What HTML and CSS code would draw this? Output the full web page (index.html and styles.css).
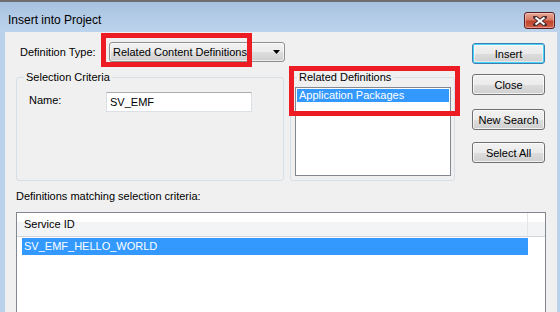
FILE: index.html
```html
<!DOCTYPE html>
<html>
<head>
<meta charset="utf-8">
<link rel="stylesheet" href="styles.css">
</head>
<body>
<div class="frame">
  <div class="titlebar">
    <span class="title">Insert into Project</span>
    <div class="close-btn">
      <svg width="14" height="10" viewBox="0 0 14 10">
        <path d="M2 1 L12 9 M12 1 L2 9" stroke="#4a3030" stroke-width="4" stroke-linecap="square"/>
        <path d="M2.5 1.5 L11.5 8.5 M11.5 1.5 L2.5 8.5" stroke="#ffffff" stroke-width="2"/>
      </svg>
    </div>
  </div>
  <div class="client">
    <div class="top">
      <div class="left">
        <div class="deftype-row">
          <span class="deftype-label">Definition Type:</span>
          <div class="combo">
            <span>Related Content Definitions</span>
            <svg class="arrow" width="7" height="4" viewBox="0 0 7 4"><path d="M0 0 H7 L3.5 4 Z" fill="#000"/></svg>
          </div>
        </div>
        <div class="groups">
          <fieldset class="group sel">
            <legend>Selection Criteria</legend>
            <div class="name-row">
              <span class="name-label">Name:</span>
              <div class="input">SV_EMF</div>
            </div>
          </fieldset>
          <fieldset class="group rel">
            <legend>Related Definitions</legend>
            <div class="listbox">
              <div class="item selected">Application Packages</div>
            </div>
          </fieldset>
        </div>
      </div>
      <div class="buttons">
        <div class="btn default">Insert</div>
        <div class="btn b-close">Close</div>
        <div class="btn b-new">New Search</div>
        <div class="btn b-all">Select All</div>
      </div>
    </div>
    <div class="matching-label">Definitions matching selection criteria:</div>
    <div class="results">
      <div class="header">
        <div class="col-main">Service ID</div>
        <div class="col-rest"></div>
      </div>
      <div class="row selected">SV_EMF_HELLO_WORLD</div>
    </div>
  </div>
  <div class="annot a1"></div>
  <div class="annot a2"></div>
</div>
</body>
</html>
```
FILE: styles.css
```css
* { box-sizing: border-box; }
html, body { margin: 0; padding: 0; }
body {
  width: 560px;
  height: 312px;
  overflow: hidden;
  font-family: "Liberation Sans", Arial, sans-serif;
  font-size: 11px;
  color: #000;
}
.frame {
  position: relative;
  width: 560px;
  height: 312px;
  background: #b9d1ea;
  border-top: 2px solid #6d6d6d;
  display: flex;
  flex-direction: column;
}
.titlebar {
  height: 30px;
  background: linear-gradient(to bottom, #a6c1df 0%, #b3cbe6 50%, #bcd3eb 100%);
  display: flex;
  align-items: flex-start;
  justify-content: space-between;
  padding: 0 5px 0 8px;
}
.title {
  margin-top: 11px;
  font-size: 12px;
  line-height: 14px;
  color: #000;
}
.close-btn {
  margin-top: 10px;
  width: 31px;
  height: 17px;
  border: 1px solid #5b1e1e;
  border-radius: 3px;
  background: linear-gradient(to bottom, #e8a898 0%, #d97a64 45%, #c0432b 55%, #d2614a 100%);
  display: flex;
  align-items: center;
  justify-content: center;
  box-shadow: inset 0 0 0 1px rgba(255,255,255,0.35);
}
.client {
  margin: 0 3px 0 5px;
  flex: 1;
  background: #f0f0f0;
  padding: 0 11px;
  display: flex;
  flex-direction: column;
}
.top {
  display: flex;
  justify-content: space-between;
}
.left { width: 439px; }
.deftype-row {
  display: flex;
  align-items: center;
  margin-top: 10px;
  height: 20px;
}
.deftype-label {
  width: 93px;
  padding-left: 4px;
}
.combo {
  width: 176px;
  height: 20px;
  border: 1px solid #8e8f8f;
  border-radius: 3px;
  background: linear-gradient(to bottom, #f2f2f2 0%, #ebebeb 50%, #dddddd 51%, #cfcfcf 100%);
  display: flex;
  align-items: center;
  justify-content: space-between;
  padding: 0 4px 0 3px;
  box-shadow: inset 0 0 0 1px rgba(255,255,255,0.6);
}
.groups {
  display: flex;
  justify-content: space-between;
  margin-top: 9px;
  height: 110px;
}
.group {
  margin: 0;
  border: 1px solid #d5dfe5;
  border-radius: 3px;
  min-width: 0;
}
.group legend {
  padding: 0 2px;
  line-height: 13px;
}
.sel {
  width: 268px;
  padding: 8px 0 0 7px;
}
.rel {
  width: 165px;
  padding: 3px 3px 4px 4px;
}
.rel legend { margin-left: 2px; }
.name-row {
  display: flex;
  align-items: flex-start;
}
.name-label {
  width: 82px;
  padding-left: 5px;
  margin-top: 2px;
}
.input {
  width: 146px;
  height: 20px;
  background: #fff;
  border: 1px solid #dbdfe6;
  border-top-color: #abadb3;
  padding: 2px 3px;
  line-height: 14px;
}
.listbox {
  width: 156px;
  height: 89px;
  background: #fff;
  border: 1px solid #828790;
  padding: 1px;
}
.item {
  height: 13px;
  line-height: 13px;
  padding-left: 2px;
}
.selected {
  background: #3399ff;
  color: #fff;
}
.buttons {
  width: 73px;
  margin-right: 1px;
  display: flex;
  flex-direction: column;
}
.btn {
  height: 21px;
  border: 1px solid #707070;
  border-radius: 3px;
  background: linear-gradient(to bottom, #f2f2f2 0%, #ebebeb 50%, #dddddd 51%, #cfcfcf 100%);
  box-shadow: inset 0 0 0 1px rgba(255,255,255,0.7);
  display: flex;
  align-items: center;
  justify-content: center;
}
.btn.default {
  margin-top: 11px;
  border-color: #3c7fb1;
  box-shadow: inset 0 0 0 1px #48d2f9, inset 0 0 0 2px rgba(255,255,255,0.5);
}
.b-close { margin-top: 10px; }
.b-new { margin-top: 14px; }
.b-all { margin-top: 12px; }
.matching-label {
  margin-top: 9px;
  line-height: 13px;
}
.results {
  margin-top: 9px;
  flex: 1;
  background: #fff;
  border: 1px solid #828790;
  border-bottom: none;
  padding: 0 0 0 5px;
}
.header {
  display: flex;
  height: 24px;
  margin-left: -5px;
  border-bottom: 1px solid #d5d5d5;
  background: linear-gradient(to bottom, #ffffff 0%, #ffffff 40%, #f3f4f6 41%, #f3f4f6 100%);
}
.col-main {
  width: 511px;
  padding-left: 7px;
  line-height: 23px;
  border-right: 1px solid #e3e5e8;
}
.col-rest { flex: 1; }
.row {
  margin-top: 1px;
  width: 506px;
  height: 17px;
  line-height: 17px;
  padding-left: 2px;
}
.annot {
  position: absolute;
  border: 5px solid #ed1c24;
}
.a1 { left: 101px; top: 31px; width: 151px; height: 34px; }
.a2 { left: 289px; top: 64px; width: 171px; height: 50px; }
```
